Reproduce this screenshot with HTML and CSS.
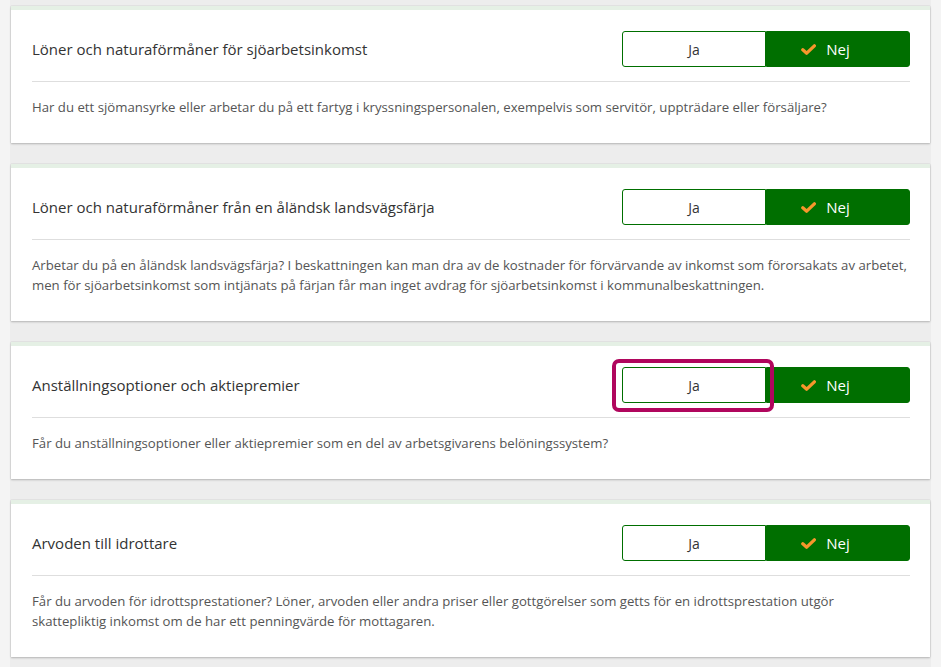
FILE: index.html
```html
<!DOCTYPE html>
<html lang="sv">
<head>
<meta charset="utf-8">
<title>Frågor</title>
<link rel="stylesheet" href="styles.css">
</head>
<body>
<main class="list">
  <section class="card">
    <div class="card-head">
      <h2 class="card-title">Löner och naturaförmåner för sjöarbetsinkomst</h2>
      <div class="toggle">
        <button class="opt">Ja</button>
        <button class="opt opt-on"><svg class="check" viewBox="0 0 16 12"><path d="M1.8 6.4 L6 10 L14.4 2" /></svg>Nej</button>
      </div>
    </div>
    <p class="card-desc">Har du ett sjömansyrke eller arbetar du på ett fartyg i kryssningspersonalen, exempelvis som servitör, uppträdare eller försäljare?</p>
  </section>
  <section class="card">
    <div class="card-head">
      <h2 class="card-title">Löner och naturaförmåner från en åländsk landsvägsfärja</h2>
      <div class="toggle">
        <button class="opt">Ja</button>
        <button class="opt opt-on"><svg class="check" viewBox="0 0 16 12"><path d="M1.8 6.4 L6 10 L14.4 2" /></svg>Nej</button>
      </div>
    </div>
    <p class="card-desc">Arbetar du på en åländsk landsvägsfärja? I beskattningen kan man dra av de kostnader för förvärvande av inkomst som förorsakats av arbetet, men för sjöarbetsinkomst som intjänats på färjan får man inget avdrag för sjöarbetsinkomst i kommunalbeskattningen.</p>
  </section>
  <section class="card">
    <div class="card-head">
      <h2 class="card-title">Anställningsoptioner och aktiepremier</h2>
      <div class="toggle">
        <button class="opt opt-focus">Ja</button>
        <button class="opt opt-on"><svg class="check" viewBox="0 0 16 12"><path d="M1.8 6.4 L6 10 L14.4 2" /></svg>Nej</button>
      </div>
    </div>
    <p class="card-desc">Får du anställningsoptioner eller aktiepremier som en del av arbetsgivarens belöningssystem?</p>
  </section>
  <section class="card">
    <div class="card-head">
      <h2 class="card-title">Arvoden till idrottare</h2>
      <div class="toggle">
        <button class="opt">Ja</button>
        <button class="opt opt-on"><svg class="check" viewBox="0 0 16 12"><path d="M1.8 6.4 L6 10 L14.4 2" /></svg>Nej</button>
      </div>
    </div>
    <p class="card-desc">Får du arvoden för idrottsprestationer? Löner, arvoden eller andra priser eller gottgörelser som getts för en idrottsprestation utgör skattepliktig inkomst om de har ett penningvärde för mottagaren.</p>
  </section>
</main>
</body>
</html>
```

FILE: styles.css
```css
* { box-sizing: border-box; }
html, body { margin: 0; padding: 0; }
body {
  background: #f4f4f4;
  font-family: "Open Sans", "Noto Sans", sans-serif;
  color: #333;
  min-height: 667px;
}
.list {
  margin: 0 10px;
  padding: 6px 1px 30px 1px;
  background: #ededed;
  display: flex;
  flex-direction: column;
  gap: 21px;
}
.card {
  background: #fff;
  border-top: 4px solid #e5f0e5;
  box-shadow: 0 1px 2px rgba(0,0,0,0.22), 0 0 1px rgba(0,0,0,0.2);
  padding: 0 20px 0 21px;
}
.card-head {
  display: flex;
  align-items: center;
  justify-content: space-between;
  padding: 21px 0 14px;
  border-bottom: 1px solid #dedede;
}
.card-title {
  margin: 0;
  font-size: 15px;
  font-weight: 400;
  color: #333;
}
.toggle {
  display: flex;
  width: 288px;
  height: 36px;
}
.opt {
  flex: 1;
  display: flex;
  align-items: center;
  justify-content: center;
  border: 1px solid #006f00;
  background: #fff;
  color: #333;
  font-family: inherit;
  font-size: 14px;
  padding: 0;
  margin: 0;
}
.opt:first-child { border-radius: 3px 0 0 3px; }
.opt:last-child { border-radius: 0 3px 3px 0; }
.opt-on {
  background: #006f00;
  color: #fff;
  font-size: 15px;
  font-weight: 500;
}
.check {
  width: 15px;
  height: 11px;
  margin-left: -25px;
  margin-right: 10px;
  fill: none;
  stroke: #f7962c;
  stroke-width: 3.6;
  stroke-linecap: round;
  stroke-linejoin: round;
}
.opt-focus {
  position: relative;
  z-index: 1;
}
.opt-focus::after {
  content: "";
  position: absolute;
  top: -9px;
  bottom: -10px;
  left: -11px;
  right: -9px;
  border: 4px solid #b0065d;
  border-radius: 7px;
  pointer-events: none;
}
.card-desc {
  margin: 0;
  padding: 15px 0 26px;
  font-size: 13.2px;
  line-height: 20px;
  color: #555;
}
```
